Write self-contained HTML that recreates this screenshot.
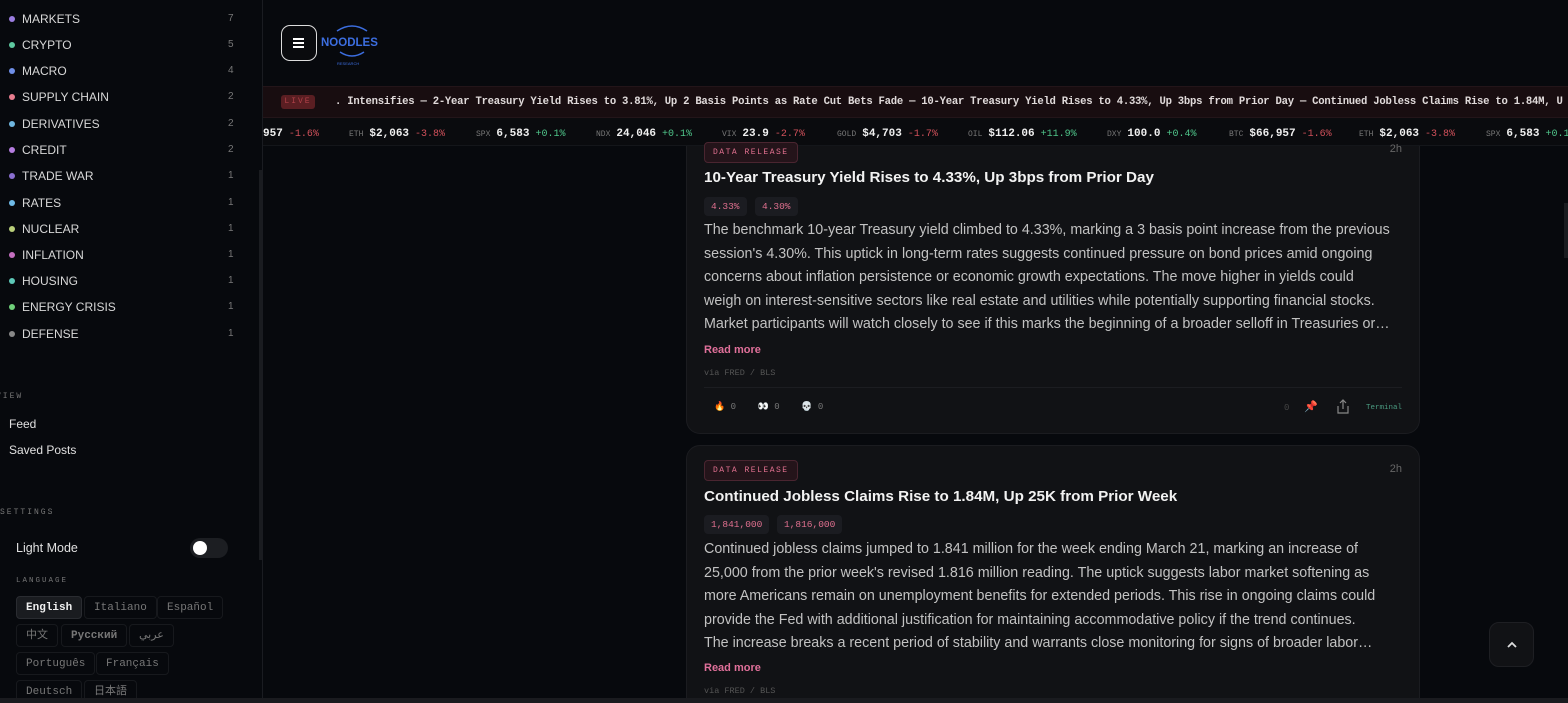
<!DOCTYPE html>
<html><head><meta charset="utf-8"><style>
*{box-sizing:border-box;margin:0;padding:0}
html,body{width:1568px;height:703px;overflow:hidden}
body{background:#07090d;font-family:"Liberation Sans",sans-serif;color:#e6e6e6;position:relative}
.mono{font-family:"Liberation Mono",monospace}
.side{position:absolute;left:0;top:0;width:263px;height:703px;background:#07090d;border-right:1px solid #1a1c21}
.cat{position:absolute;left:9px;font-size:12px;color:#d8d8d8;display:flex;align-items:center}
.cat i{width:6px;height:6px;border-radius:50%;margin-right:7px;display:inline-block}
.cnt{position:absolute;left:228px;font-size:10px;color:#777}
.lbl{position:absolute;font-size:8px;letter-spacing:2px;color:#777;font-family:"Liberation Mono",monospace}
.lang{position:absolute;font-size:11px;color:#777;border:1px solid #17191d;border-radius:4px;padding:3px 9px;font-family:"Liberation Mono","Noto Sans CJK SC",monospace;height:23px;line-height:16px}
.card{position:absolute;left:686px;width:734px;background:#111215;border:1px solid #1b1c20;border-radius:14px}
.tag{position:absolute;left:17px;font-size:8px;letter-spacing:1.5px;color:#e0708f;border:1px solid #4a2530;background:#24141a;border-radius:4px;padding:5px 8px;font-family:"Liberation Mono",monospace}
.ttl{position:absolute;left:17px;font-size:15.2px;font-weight:bold;color:#f2f2f2;white-space:nowrap}
.chip{position:absolute;font-size:9.5px;color:#e0708f;background:#1b1c21;border-radius:4px;padding:4px 7px;font-family:"Liberation Mono",monospace}
.body{position:absolute;left:17px;width:700px;font-size:14.3px;line-height:23.6px;color:#c2c2c2;white-space:nowrap}
.rm{position:absolute;left:17px;font-size:11px;color:#e0709a;font-weight:bold}
.via{position:absolute;left:17px;font-size:8.5px;color:#555;font-family:"Liberation Mono",monospace}
.tk{position:absolute;top:128px;font-size:10px;white-space:nowrap;font-family:"Liberation Mono",monospace}
.tk b{color:#f0f0f0;font-size:11px}
.g{color:#4fc58a}.r{color:#d0505a}.s{color:#777;font-size:8px}
</style></head><body>
<div class="side">
<div class="cat" style="top:12px"><i style="background:#9b7de0"></i>MARKETS</div><div class="cnt" style="top:13px">7</div>
<div class="cat" style="top:38px"><i style="background:#5ec9a0"></i>CRYPTO</div><div class="cnt" style="top:39px">5</div>
<div class="cat" style="top:64px"><i style="background:#6f8fe8"></i>MACRO</div><div class="cnt" style="top:65px">4</div>
<div class="cat" style="top:90px"><i style="background:#e87d8f"></i>SUPPLY CHAIN</div><div class="cnt" style="top:91px">2</div>
<div class="cat" style="top:117px"><i style="background:#6fb7e0"></i>DERIVATIVES</div><div class="cnt" style="top:118px">2</div>
<div class="cat" style="top:143px"><i style="background:#b57de0"></i>CREDIT</div><div class="cnt" style="top:144px">2</div>
<div class="cat" style="top:169px"><i style="background:#8a6fd0"></i>TRADE WAR</div><div class="cnt" style="top:170px">1</div>
<div class="cat" style="top:196px"><i style="background:#6fbbe8"></i>RATES</div><div class="cnt" style="top:197px">1</div>
<div class="cat" style="top:222px"><i style="background:#b9cf7a"></i>NUCLEAR</div><div class="cnt" style="top:223px">1</div>
<div class="cat" style="top:248px"><i style="background:#c56fc0"></i>INFLATION</div><div class="cnt" style="top:249px">1</div>
<div class="cat" style="top:274px"><i style="background:#5ec9b8"></i>HOUSING</div><div class="cnt" style="top:275px">1</div>
<div class="cat" style="top:300px"><i style="background:#6fd07a"></i>ENERGY CRISIS</div><div class="cnt" style="top:301px">1</div>
<div class="cat" style="top:327px"><i style="background:#888"></i>DEFENSE</div><div class="cnt" style="top:328px">1</div>
<div class="lbl" style="left:-4px;top:392px">VIEW</div>
<div style="position:absolute;left:9px;top:417px;font-size:12px;color:#e0e0e0">Feed</div>
<div style="position:absolute;left:9px;top:443px;font-size:12px;color:#e0e0e0">Saved Posts</div>
<div class="lbl" style="left:0;top:508px">SETTINGS</div>
<div style="position:absolute;left:16px;top:541px;font-size:12.5px;color:#e0e0e0">Light Mode</div>
<div style="position:absolute;left:190px;top:538px;width:38px;height:20px;border-radius:10px;background:#1c1e22"><div style="position:absolute;left:3px;top:3px;width:14px;height:14px;border-radius:50%;background:#fff"></div></div>
<div class="lbl" style="left:16px;top:577px;font-size:7.5px">LANGUAGE</div>
<div class="lang" style="left:16px;top:596px;background:#1a1c20;border-color:#2a2c31;color:#f0f0f0;font-weight:bold">English</div>
<div class="lang" style="left:84px;top:596px">Italiano</div>
<div class="lang" style="left:157px;top:596px">Español</div>
<div class="lang" style="left:16px;top:624px">中文</div>
<div class="lang" style="left:61px;top:624px;font-weight:bold">Русский</div>
<div class="lang" style="left:129px;top:624px">عربي</div>
<div class="lang" style="left:16px;top:652px">Português</div>
<div class="lang" style="left:96px;top:652px">Français</div>
<div class="lang" style="left:16px;top:680px">Deutsch</div>
<div class="lang" style="left:84px;top:680px">日本語</div>
<div style="position:absolute;left:259px;top:170px;width:3px;height:390px;background:#1a1c20"></div>
</div>
<div style="position:absolute;left:281px;top:25px;width:36px;height:36px;border:1.5px solid #ddd;border-radius:9px;background:#0a0b0e"><div style="position:absolute;left:11px;top:12px;width:11px;height:1.6px;background:#fff;box-shadow:0 4px 0 #fff,0 8px 0 #fff"></div></div>
<svg style="position:absolute;left:320px;top:22px" width="64" height="46"><path d="M17 9 Q32 -1 47 9" stroke="#3c6ee0" stroke-width="1.5" fill="none"/><path d="M20 30 Q32 38 44 30" stroke="#3c6ee0" stroke-width="1.5" fill="none"/><text x="1" y="24" font-family="Liberation Sans" font-weight="bold" font-size="11.5" fill="#3c6ee0">NOODLES</text><text x="17" y="43" font-size="4" fill="#3c6ee0" font-family="Liberation Sans">RESEARCH</text></svg>
<div style="position:absolute;left:263px;top:86px;width:1305px;height:32px;background:#180d10;border-top:1px solid #231519;border-bottom:1px solid #231519;overflow:hidden">
<div style="position:absolute;left:18px;top:8px;width:34px;height:14px;background:#5a1e22;border-radius:3px;font-size:8px;color:#b04048;letter-spacing:2px;text-align:center;line-height:14px" class="mono">LIVE</div>
<div class="mono" style="position:absolute;left:72px;top:9px;font-size:10.6px;font-weight:bold;color:#e0dada;white-space:nowrap;letter-spacing:-0.25px">. Intensifies — 2-Year Treasury Yield Rises to 3.81%, Up 2 Basis Points as Rate Cut Bets Fade — 10-Year Treasury Yield Rises to 4.33%, Up 3bps from Prior Day — Continued Jobless Claims Rise to 1.84M, U</div>
</div>
<div style="position:absolute;left:263px;top:118px;width:1305px;height:28px;background:#0a0b0e;border-bottom:1px solid #14161a"></div>
<div class="tk" style="left:263px"><b>957</b> <span class="r">-1.6%</span></div>
<div class="tk" style="left:349px"><span class="s">ETH</span> <b>$2,063</b> <span class="r">-3.8%</span></div>
<div class="tk" style="left:476px"><span class="s">SPX</span> <b>6,583</b> <span class="g">+0.1%</span></div>
<div class="tk" style="left:596px"><span class="s">NDX</span> <b>24,046</b> <span class="g">+0.1%</span></div>
<div class="tk" style="left:722px"><span class="s">VIX</span> <b>23.9</b> <span class="r">-2.7%</span></div>
<div class="tk" style="left:837px"><span class="s">GOLD</span> <b>$4,703</b> <span class="r">-1.7%</span></div>
<div class="tk" style="left:968px"><span class="s">OIL</span> <b>$112.06</b> <span class="g">+11.9%</span></div>
<div class="tk" style="left:1107px"><span class="s">DXY</span> <b>100.0</b> <span class="g">+0.4%</span></div>
<div class="tk" style="left:1229px"><span class="s">BTC</span> <b>$66,957</b> <span class="r">-1.6%</span></div>
<div class="tk" style="left:1359px"><span class="s">ETH</span> <b>$2,063</b> <span class="r">-3.8%</span></div>
<div class="tk" style="left:1486px"><span class="s">SPX</span> <b>6,583</b> <span class="g">+0.1%</span></div>
<div class="card" style="top:146px;height:288px;border-top:none;border-radius:0 0 14px 14px">
<div class="tag" style="top:-4px">DATA RELEASE</div>
<div style="position:absolute;right:17px;top:-3px;font-size:11px;color:#666">2h</div>
<div class="ttl" style="top:23px">10-Year Treasury Yield Rises to 4.33%, Up 3bps from Prior Day</div>
<div class="chip" style="left:17px;top:51px">4.33%</div><div class="chip" style="left:68px;top:51px">4.30%</div>
<div class="body" style="top:73px">The benchmark 10-year Treasury yield climbed to 4.33%, marking a 3 basis point increase from the previous<br>session's 4.30%. This uptick in long-term rates suggests continued pressure on bond prices amid ongoing<br>concerns about inflation persistence or economic growth expectations. The move higher in yields could<br>weigh on interest-sensitive sectors like real estate and utilities while potentially supporting financial stocks.<br>Market participants will watch closely to see if this marks the beginning of a broader selloff in Treasuries or…</div>
<div class="rm" style="top:198px">Read more</div>
<div class="via" style="top:222px">via FRED / BLS</div>
<div style="position:absolute;left:17px;right:17px;top:241px;height:1px;background:#1c1d21"></div>
<div class="mono" style="position:absolute;left:27px;top:256px;font-size:9px;color:#777">🔥 0 &nbsp;&nbsp;&nbsp;👀 0 &nbsp;&nbsp;&nbsp;💀 0</div>
<div class="mono" style="position:absolute;left:597px;top:257px;font-size:9px;color:#444">0</div>
<div style="position:absolute;left:617px;top:254px;font-size:11px;color:#c0405a">📌</div>
<svg style="position:absolute;left:649px;top:253px" width="14" height="16" fill="none" stroke="#888" stroke-width="1.2"><path d="M7 1v9M4 4l3-3 3 3M2 7v7h10V7"/></svg>
<div class="mono" style="position:absolute;left:679px;top:258px;font-size:7.5px;color:#4a9a80">Terminal</div>
</div>
<div class="card" style="top:445px;height:270px">
<div class="tag" style="top:14px">DATA RELEASE</div>
<div style="position:absolute;right:17px;top:17px;font-size:11px;color:#666">2h</div>
<div class="ttl" style="top:42px">Continued Jobless Claims Rise to 1.84M, Up 25K from Prior Week</div>
<div class="chip" style="left:17px;top:69px">1,841,000</div><div class="chip" style="left:90px;top:69px">1,816,000</div>
<div class="body" style="top:92px">Continued jobless claims jumped to 1.841 million for the week ending March 21, marking an increase of<br>25,000 from the prior week's revised 1.816 million reading. The uptick suggests labor market softening as<br>more Americans remain on unemployment benefits for extended periods. This rise in ongoing claims could<br>provide the Fed with additional justification for maintaining accommodative policy if the trend continues.<br>The increase breaks a recent period of stability and warrants close monitoring for signs of broader labor…</div>
<div class="rm" style="top:216px">Read more</div>
<div class="via" style="top:240px">via FRED / BLS</div>
</div>
<div style="position:absolute;left:1489px;top:622px;width:45px;height:45px;border-radius:10px;background:#111215;border:1px solid #1e1f23"><svg style="position:absolute;left:16px;top:18px" width="12" height="8" fill="none" stroke="#ddd" stroke-width="1.8"><path d="M2 6l4-4 4 4"/></svg></div>
<div style="position:absolute;left:1564px;top:203px;width:4px;height:55px;background:#1a1c20"></div>
<div style="position:absolute;left:0;top:698px;width:1568px;height:5px;background:#1a1b1f"></div>
</body></html>
